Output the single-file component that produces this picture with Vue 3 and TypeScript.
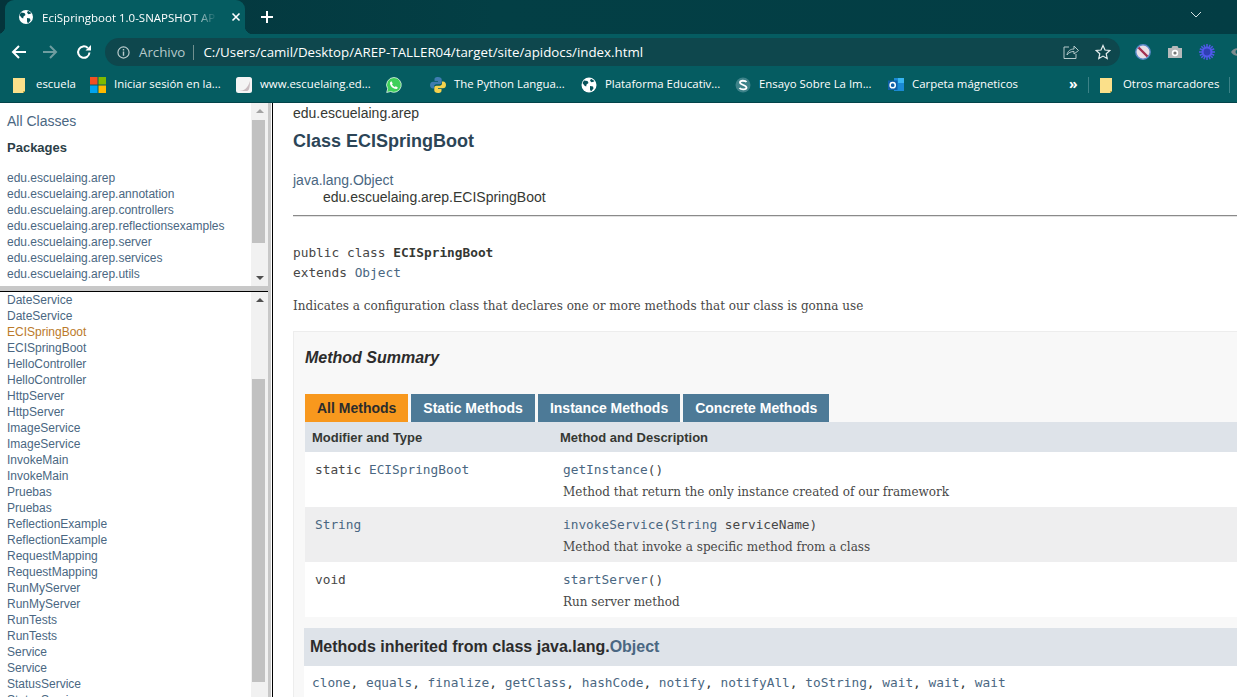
<script setup lang="ts">
const bookmarks = [
  { icon: 'folder', label: 'escuela', w: 77 },
  { icon: 'ms', label: 'Iniciar sesión en la...', w: 146 },
  { icon: 'page', label: 'www.escuelaing.ed...', w: 150 },
  { icon: 'wa', label: '', w: 44 },
  { icon: 'py', label: 'The Python Langua...', w: 151 },
  { icon: 'globe', label: 'Plataforma Educativ...', w: 154 },
  { icon: 's', label: 'Ensayo Sobre La Im...', w: 153 },
  { icon: 'ol', label: 'Carpeta mágneticos', w: 170 }
]
const packages = ['edu.escuelaing.arep', 'edu.escuelaing.arep.annotation', 'edu.escuelaing.arep.controllers', 'edu.escuelaing.arep.reflectionsexamples', 'edu.escuelaing.arep.server', 'edu.escuelaing.arep.services', 'edu.escuelaing.arep.utils']
const names = ['DateService', 'ECISpringBoot', 'HelloController', 'HttpServer', 'ImageService', 'InvokeMain', 'Pruebas', 'ReflectionExample', 'RequestMapping', 'RunMyServer', 'RunTests', 'Service', 'StatusService']
const classes = names.flatMap((n) => [n, n])
const tabs = ['All Methods', 'Static Methods', 'Instance Methods', 'Concrete Methods']
</script>

<template>
  <div class="window">
    <header class="tabstrip">
      <div class="tab">
        <svg class="ico16" viewBox="0 0 16 16"><circle cx="8" cy="8" r="7" fill="#fff"/><path d="M3 3.500l3.500.5 1 2-2 1.500-.3 2-1.600-.8L1.500 6zM10 1.800l-1 2 1.500 1.500 2-.5 1-.8zM9 9l3 .5.500 2-2.500 3-1-2z" fill="#05525a"/></svg>
        <span class="tab-title">EciSpringboot 1.0-SNAPSHOT AP</span>
        <svg class="tab-x" viewBox="0 0 10 10"><path d="M1.500 1.500l7 7M8.500 1.500l-7 7" stroke="#fff" stroke-width="1.600"/></svg>
      </div>
      <svg class="tab-plus" viewBox="0 0 12 12"><path d="M6 0v12M0 6h12" stroke="#fff" stroke-width="2"/></svg>
      <svg class="chev" viewBox="0 0 12 7"><path d="M1 1l5 5 5-5" fill="none" stroke="#d5e2e3" stroke-width="1"/></svg>
    </header>

    <nav class="toolbar">
      <svg class="nav back" viewBox="0 0 16 16"><path d="M15 8H2M8 2L2 8l6 6" fill="none" stroke="#fff" stroke-width="2"/></svg>
      <svg class="nav fwd" viewBox="0 0 16 16"><path d="M1 8h13M8 2l6 6-6 6" fill="none" stroke="#6f9da0" stroke-width="2"/></svg>
      <svg class="nav reload" viewBox="0 0 16 16"><path d="M13.500 8.500A5.700 5.700 0 1 1 11.800 4" fill="none" stroke="#fff" stroke-width="2"/><path d="M9.500 6.500H15V1z" fill="#fff"/></svg>
      <div class="omnibox">
        <svg class="info" viewBox="0 0 14 14"><circle cx="7" cy="7" r="6" fill="none" stroke="#b9cbcc" stroke-width="1.300"/><path d="M7 6v4.500M7 3.300v1.500" stroke="#b9cbcc" stroke-width="1.500"/></svg>
        <span class="archivo">Archivo</span>
        <span class="omni-sep"></span>
        <span class="url">C:/Users/camil/Desktop/AREP-TALLER04/target/site/apidocs/index.html</span>
        <svg class="share" viewBox="0 0 16 16"><path d="M6 3H1v11.500h12V10" fill="none" stroke="#b5cacb" stroke-width="1"/><path d="M4 11c.5-4 3.500-6 7-6V2l4.500 4.500L11 10V7.500c-3 0-5.500 1-7 3.500z" fill="none" stroke="#b5cacb" stroke-width="1"/></svg>
        <svg class="star" viewBox="0 0 16 16"><path d="M8 1.500l2 4.500 4.800.5-3.600 3.200 1 4.800L8 12.100l-4.200 2.400 1-4.800L1.200 6.500 6 6z" fill="none" stroke="#e6eeee" stroke-width="1.200"/></svg>
      </div>
      <div class="exts">
        <svg class="ico16" viewBox="0 0 16 16"><circle cx="8" cy="8" r="7.200" fill="#e9dfe6" stroke="#5a88c9" stroke-width="1.400"/><path d="M3.500 3.500l9 9" stroke="#a33050" stroke-width="2.400"/></svg>
        <svg class="ico16" viewBox="0 0 16 16"><path d="M1 4h3.500l1-2h5l1 2H15v10H1z" fill="#b7b9ba"/><circle cx="8" cy="9" r="3.200" fill="#fff"/><circle cx="8" cy="9" r="1.600" fill="#777"/></svg>
        <svg class="ico16" viewBox="0 0 16 16"><path d="M8 0v16M0 8h16M2.300 2.300l11.400 11.400M13.700 2.300L2.300 13.700M4.800 .8l6.400 14.400M11.200 .8L4.800 15.200M.8 4.800l14.400 6.400M15.200 4.800L.8 11.200" stroke="#5058ea" stroke-width="1.500"/><circle cx="8" cy="8" r="4.400" fill="#2f3fb4" stroke="#5058ea" stroke-width="2"/></svg>
        <svg class="ico16" viewBox="0 0 16 16"><path d="M0 8c3-5 10-5 13 0-3 5-10 5-13 0z" fill="#7c8c8e"/><circle cx="6.500" cy="8" r="2" fill="#055c61"/></svg>
      </div>
    </nav>

    <div class="bookmarks">
      <div v-for="b in bookmarks" :key="b.icon" class="bm" :style="{ width: b.w + 'px' }">
        <svg v-if="b.icon === 'folder'" class="ico-f" viewBox="0 0 13 15"><path d="M0 0h12v13l-2 2H0z" fill="#fbe08a"/><path d="M10 15l2-2h-2z" fill="#c9a93f"/></svg>
        <svg v-else-if="b.icon === 'ms'" class="ico16" viewBox="0 0 16 16"><path d="M0 0h7.500v7.500H0z" fill="#f25022"/><path d="M8.500 0H16v7.500H8.500z" fill="#7fba00"/><path d="M0 8.500h7.500V16H0z" fill="#00a4ef"/><path d="M8.500 8.500H16V16H8.500z" fill="#ffb900"/></svg>
        <svg v-else-if="b.icon === 'page'" class="ico16" viewBox="0 0 16 16"><rect width="16" height="16" rx="2.500" fill="#f4f4f4"/><path d="M3 14c5 0 9-3 11-10 0 6-1 10-3 10z" fill="#c9bcc0"/></svg>
        <svg v-else-if="b.icon === 'wa'" class="ico16" viewBox="0 0 16 16"><path d="M8 .500a7.400 7.400 0 0 0-6.300 11.300L.700 15.500l3.800-1A7.400 7.400 0 1 0 8 .500z" fill="#3fd05a" stroke="#fff" stroke-width=".7"/><path d="M5.500 4.200l1.200 2.300-.7 1c.7 1.300 1.500 2 2.800 2.600l1-.8 2 1.100c-.3 1.500-1.700 1.800-3 1.400-2.500-.8-4.200-2.700-4.800-4.900-.3-1.300.3-2.300 1.500-2.700z" fill="#fff"/></svg>
        <svg v-else-if="b.icon === 'py'" class="ico16" viewBox="0 0 16 16"><path d="M8 0C5 0 4.500 1.200 4.500 2.500V4H8v.7H3C1.200 4.700 0 6 0 8s1.200 3.500 2.800 3.500H4V9.700C4 8.300 5 7.300 6.300 7.300h3.400c1.200 0 2-.9 2-2V2.500C11.700 1 10.300 0 8 0z" fill="#3f7cb0"/><path d="M8 16c3 0 3.500-1.200 3.500-2.500V12H8v-.7h5c1.800 0 3-1.300 3-3.300s-1.200-3.500-2.800-3.500H12v1.800c0 1.400-1 2.400-2.300 2.400H6.300c-1.200 0-2 .9-2 2v2.800C4.300 15 5.700 16 8 16z" fill="#f6d24d"/></svg>
        <svg v-else-if="b.icon === 'globe'" class="ico16" viewBox="0 0 16 16"><circle cx="8" cy="8" r="7.500" fill="#fff"/><path d="M3 3.500l3.500.5 1 2-2 1.500-.3 2-1.600-.8L1.500 6zM10 1.800l-1 2 1.500 1.500 2-.5 1-.8zM9 9l3 .5.500 2-2.500 3-1-2z" fill="#05525a"/></svg>
        <svg v-else-if="b.icon === 's'" class="ico16" viewBox="0 0 16 16"><circle cx="8" cy="8" r="7.500" fill="#3d8289"/><path d="M11.500 5C10.500 3.500 5 3 5 5.500S11.500 8 11.500 10.500 6 13 4.500 11" fill="none" stroke="#fff" stroke-width="1.800"/></svg>
        <svg v-else class="ico16" viewBox="0 0 16 16"><path d="M6 1h10v13H6z" fill="#1a8ad4"/><path d="M10 1h6v5h-6z" fill="#38b6f2"/><path d="M0 3.500h9.500v9.500H0z" fill="#0f5fa8"/><circle cx="4.700" cy="8.200" r="2.600" fill="none" stroke="#fff" stroke-width="1.500"/></svg>
        <span v-if="b.label" class="bm-text">{{ b.label }}</span>
      </div>
      <span class="more">»</span>
      <span class="bm-sep"></span>
      <div class="bm other">
        <svg class="ico-f" viewBox="0 0 13 15"><path d="M0 0h12v13l-2 2H0z" fill="#fbe08a"/><path d="M10 15l2-2h-2z" fill="#c9a93f"/></svg>
        <span class="bm-text">Otros marcadores</span>
      </div>
      <span class="bm-sep"></span>
    </div>

    <main class="frames">
      <aside class="nav-frames">
        <section class="pane pane-top">
          <div class="pane-list">
            <a class="all">All Classes</a>
            <h2 class="pk-title">Packages</h2>
            <ul class="pk-list">
              <li v-for="p in packages" :key="p">{{ p }}</li>
            </ul>
          </div>
          <div class="sbar">
            <span class="arrow up"></span>
            <span class="thumb thumb-top"></span>
            <span class="arrow down"></span>
          </div>
        </section>
        <div class="h-split"></div>
        <section class="pane pane-bottom">
          <div class="pane-list">
            <ul class="cl-list">
              <li v-for="(c, i) in classes" :key="i" :class="{ visited: i === 2 }">{{ c }}</li>
            </ul>
          </div>
          <div class="sbar">
            <span class="arrow up"></span>
            <span class="thumb thumb-bottom"></span>
          </div>
        </section>
      </aside>
      <div class="v-split"></div>

      <article class="doc">
        <div class="sub">edu.escuelaing.arep</div>
        <h1 class="title">Class ECISpringBoot</h1>
        <div class="inherit"><a>java.lang.Object</a></div>
        <div class="inherit child">edu.escuelaing.arep.ECISpringBoot</div>
        <hr class="rule" />
        <pre class="sig">public class <b>ECISpringBoot</b>
extends <a>Object</a></pre>
        <p class="desc">Indicates a configuration class that declares one or more methods that our class is gonna use</p>

        <section class="summary">
          <h3 class="sum-title">Method Summary</h3>
          <div class="tabs">
            <span v-for="(t, i) in tabs" :key="t" class="mtab" :class="{ active: i === 0 }">{{ t }}</span>
          </div>
          <div class="row head"><span class="c1">Modifier and Type</span><span>Method and Description</span></div>
          <div class="row">
            <code class="c1 cell">static <a>ECISpringBoot</a></code>
            <div class="cell"><code><a>getInstance</a>()</code><p>Method that return the only instance created of our framework</p></div>
          </div>
          <div class="row alt">
            <code class="c1 cell"><a>String</a></code>
            <div class="cell"><code><a>invokeService</a>(<a>String</a> serviceName)</code><p>Method that invoke a specific method from a class</p></div>
          </div>
          <div class="row">
            <code class="c1 cell">void</code>
            <div class="cell"><code><a>startServer</a>()</code><p>Run server method</p></div>
          </div>
          <h3 class="inh-title">Methods inherited from class java.lang.<a>Object</a></h3>
          <code class="inh-body"><a>clone</a>, <a>equals</a>, <a>finalize</a>, <a>getClass</a>, <a>hashCode</a>, <a>notify</a>, <a>notifyAll</a>, <a>toString</a>, <a>wait</a>, <a>wait</a>, <a>wait</a></code>
        </section>
      </article>
    </main>
  </div>
</template>

<style scoped>
.window { width: 1237px; height: 697px; overflow: hidden; display: flex; flex-direction: column; background: #fff; font-family: "Liberation Sans", Arial, sans-serif; }
.tabstrip { height: 34px; flex: none; display: flex; align-items: flex-start; background: linear-gradient(90deg, #04343b, #033f45 40%, #033d44); color: #fff; }
.tab { position: relative; width: 240px; height: 34px; margin-left: 5px; padding: 0 10px 0 13px; box-sizing: border-box; display: flex; align-items: center; gap: 8px; background: #055c61; border-radius: 9px 9px 0 0; }
.tab::before, .tab::after { content: ""; position: absolute; bottom: 0; width: 8px; height: 8px; }
.tab::before { left: -8px; background: radial-gradient(circle at 0 0, transparent 8px, #055c61 8.500px); }
.tab::after { right: -8px; background: radial-gradient(circle at 100% 0, transparent 8px, #055c61 8.500px); }
.ico16 { width: 16px; height: 16px; flex: none; display: block; }
.tab-title { width: 175px; flex: none; white-space: nowrap; font: 11.5px "Open Sans", sans-serif; color: #fff; -webkit-mask-image: linear-gradient(90deg, #000 85%, transparent 100%); mask-image: linear-gradient(90deg, #000 85%, transparent 100%); }
.tab-x { width: 10px; height: 10px; flex: none; margin-left: 6px; }
.tab-plus { width: 12px; height: 12px; margin: 11px 0 0 16px; flex: none; }
.chev { width: 12px; height: 7px; margin: 11px 35px 0 auto; flex: none; }

.toolbar { height: 34px; padding-top: 2px; box-sizing: border-box; flex: none; display: flex; align-items: center; background: #055c61; }
.nav { width: 16px; height: 16px; flex: none; }
.back { margin-left: 11px; }
.fwd { margin-left: 15px; }
.reload { margin-left: 18px; }
.omnibox { width: 1015px; height: 28px; margin-left: 13px; border-radius: 14px; background: #0e474d; display: flex; align-items: center; flex: none; box-sizing: border-box; padding: 0 9px 0 12px; }
.info { width: 13px; height: 13px; flex: none; }
.archivo { margin-left: 9px; font: 13.3px "Open Sans", sans-serif; color: #b5c9ca; }
.omni-sep { width: 1px; height: 15px; background: #71908f; margin: 0 9px 0 8px; }
.url { flex: 1; font: 13.3px "Open Sans", sans-serif; color: #fff; white-space: nowrap; }
.share { width: 16px; height: 16px; flex: none; margin-right: 16px; }
.star { width: 16px; height: 16px; flex: none; }
.exts { display: flex; gap: 16px; margin-left: 15px; flex: none; }

.bookmarks { height: 34px; flex: none; display: flex; align-items: center; padding-left: 13px; background: #055c61; color: #fff; box-sizing: border-box; }
.bm { display: flex; align-items: center; gap: 8px; flex: none; box-sizing: border-box; }
.bm-text { font: 11.4px "Open Sans", sans-serif; color: #fff; white-space: nowrap; margin-bottom: 3px; }
.ico-f { width: 13px; height: 15px; flex: none; margin-right: 2px; }
.more { font: 700 14px "Open Sans", sans-serif; margin-left: 11px; width: 11px; flex: none; margin-bottom: 3px; }
.bm-sep { width: 1px; height: 16px; background: #3c8287; margin: 0 11px 0 8px; flex: none; }
.other { margin-right: 2px; }

.frames { flex: 1; display: flex; min-height: 0; border-top: 1px solid #03444a; }
.nav-frames { width: 268px; flex: none; display: flex; flex-direction: column; }
.pane { display: flex; overflow: hidden; }
.pane-top { height: 183px; flex: none; }
.pane-bottom { flex: 1; min-height: 0; }
.pane-list { flex: 1; overflow: hidden; padding-left: 7px; color: #4a6782; }
.all { display: block; font-size: 14px; line-height: 16px; margin-top: 10px; }
.pk-title { margin: 11px 0 0; font-size: 13px; line-height: 16px; font-weight: 700; color: #2c3e47; }
.pk-list, .cl-list { list-style: none; margin: 0; padding: 0; font-size: 12px; line-height: 16px; white-space: nowrap; }
.pk-list { margin-top: 14px; }
.visited { color: #bb7a2a; }
.sbar { width: 17px; flex: none; background: #f1f1f1; display: flex; flex-direction: column; align-items: center; }
.thumb { width: 13px; background: #c1c1c1; flex: none; align-self: flex-start; margin-left: 1px; }
.thumb-top { height: 123px; margin-top: 7px; margin-bottom: auto; }
.thumb-bottom { height: 303px; margin-top: 77px; }
.arrow { width: 0; height: 0; border-left: 4px solid transparent; border-right: 4px solid transparent; flex: none; }
.up { border-bottom: 4px solid #505050; margin-top: 6px; }
.down { border-top: 4px solid #505050; margin-bottom: 6px; }
.pane-top .up { border-bottom-color: #a3a3a3; }
.h-split { height: 6px; flex: none; background: #c8c8c8; border-bottom: 1px solid #000; box-sizing: border-box; }
.v-split { width: 5px; flex: none; background: linear-gradient(90deg, #c8c8c8 0 3px, #fff 3px 4px, #000 4px); }

.doc { flex: 1; min-width: 0; overflow: hidden; padding-left: 20px; color: #353833; }
.sub { font-size: 14px; line-height: 16px; margin-top: 2px; }
.title { margin: 9px 0 0; font-size: 18px; line-height: 22px; font-weight: 700; color: #2c4557; }
.inherit { font-size: 14px; line-height: 17px; }
.title + .inherit { margin-top: 20px; }
.inherit a { color: #4a6782; }
.child { padding-left: 30px; }
.rule { margin: 9px 0 0; border: 0; border-top: 1px solid #8a8a8a; border-bottom: 1px solid #e2e2e2; height: 0; }
.sig { margin: 26px 0 0; font: 12.8px/20px "DejaVu Sans Mono", monospace; color: #474747; }
.sig b { color: #353833; }
.sig a { color: #4a6782; }
.desc { margin: 13px 0 0; font: 12px/20px "DejaVu Serif", serif; color: #474747; white-space: nowrap; }
.summary { margin-top: 15px; background: #f8f8f8; border: 1px solid #ededed; border-right: 0; padding: 0 0 0 11px; }
.sum-title { margin: 16px 0 0; font-size: 16px; line-height: 20px; font-weight: 700; font-style: italic; color: #2c2c2c; }
.tabs { display: flex; gap: 3px; margin-top: 26px; }
.mtab { height: 28px; line-height: 28px; padding: 0 12px; font-size: 14px; font-weight: 700; color: #fff; background: #4d7a97; }
.mtab.active { color: #2c2c2c; background: #f8981d; }
.row { display: flex; height: 55px; background: #fff; color: #474747; }
.row.alt { background: #eeeeef; }
.row.head { height: 30px; background: #dee3e9; align-items: center; font-size: 13px; font-weight: 700; padding-left: 7px; color: #353833; }
.head .c1 { width: 248px; flex: none; }
.cell { padding-top: 8px; font: 12.8px/20px "DejaVu Sans Mono", monospace; }
.c1.cell { width: 248px; flex: none; padding-left: 10px; box-sizing: content-box; }
.cell code { display: block; font: 12.8px/20px "DejaVu Sans Mono", monospace; }
.cell p { margin: 2px 0 0; font: 12px/20px "DejaVu Serif", serif; color: #474747; white-space: nowrap; }
.cell a, .inh-body a { color: #4a6782; }
.inh-title { margin: 11px 0 0 -1px; height: 38px; line-height: 38px; padding-left: 6px; background: #dee3e9; font-size: 16px; font-weight: 700; color: #2c2c2c; white-space: nowrap; }
.inh-title a { color: #4a6782; }
.inh-body { display: block; background: #fff; margin-left: -1px; padding: 7px 0 6px 8px; font: 12.8px/20px "DejaVu Sans Mono", monospace; white-space: nowrap; }
</style>
